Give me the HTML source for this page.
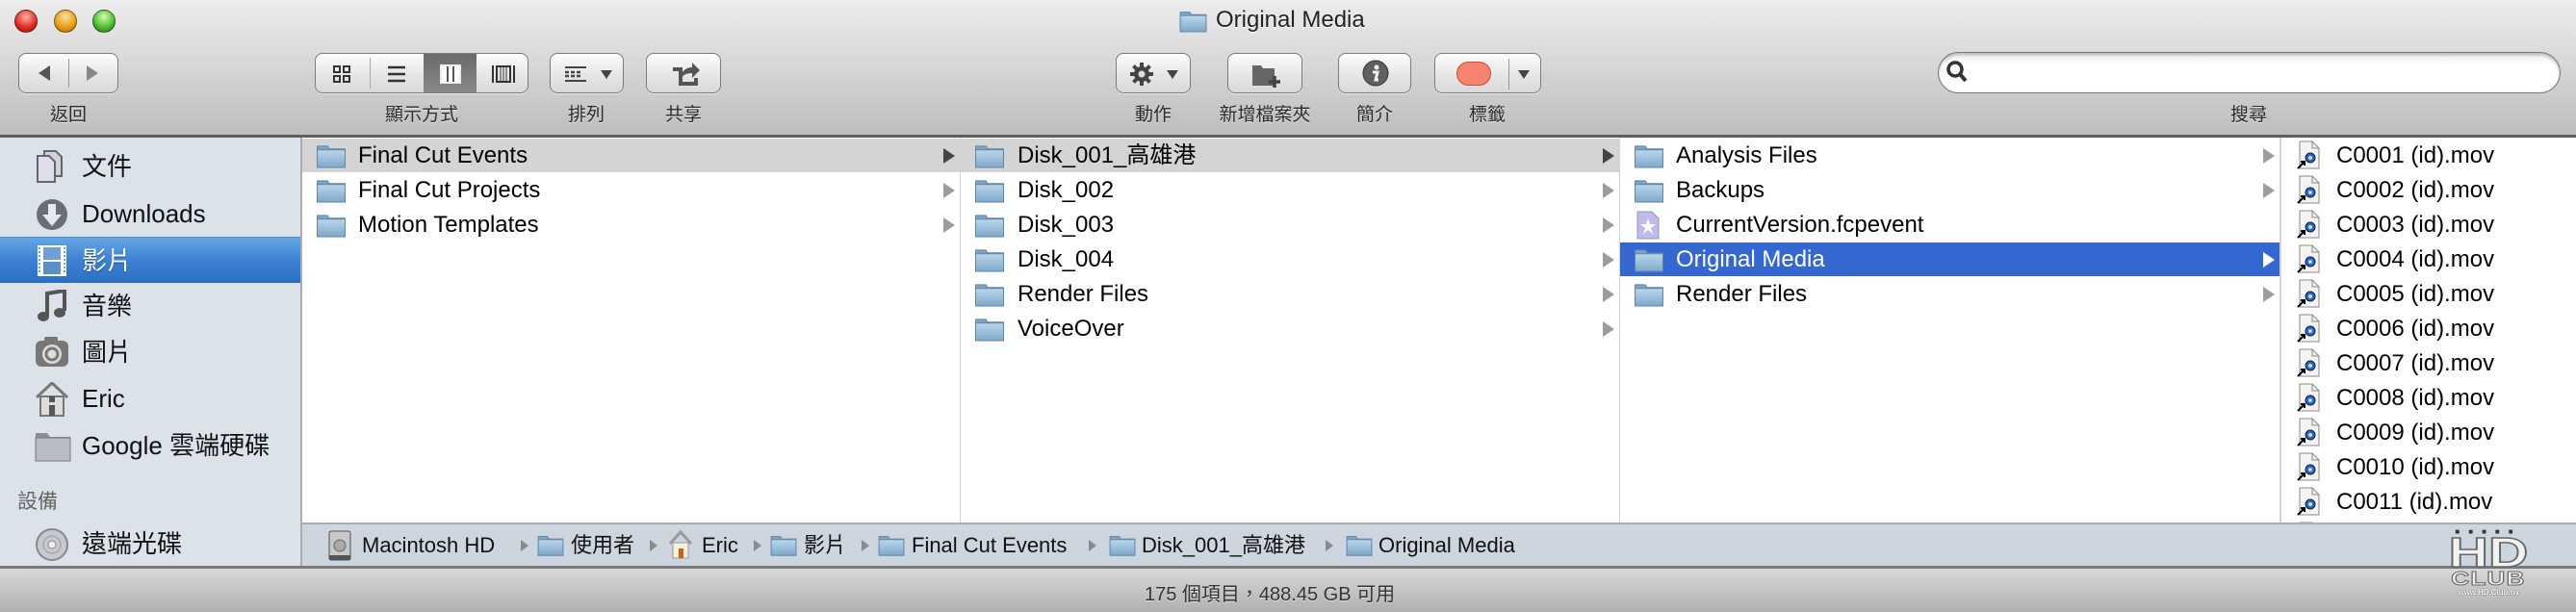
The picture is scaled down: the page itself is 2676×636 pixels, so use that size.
<!DOCTYPE html>
<html><head><meta charset="utf-8">
<style>
*{margin:0;padding:0;box-sizing:border-box}
body{width:2676px;height:636px;overflow:hidden;position:relative;font-family:"Liberation Sans","Noto Sans CJK TC",sans-serif;background:#fff;color:#000}
.abs{position:absolute}
#tb{left:0;top:0;width:2676px;height:140px;background:linear-gradient(#ececec,#d6d6d6 50%,#bdbdbd);}
#tbline{left:0;top:140px;width:2676px;height:3px;background:#5e5e5e}
.tl{position:absolute;top:10px;width:24px;height:24px;border-radius:50%;border:1px solid rgba(0,0,0,.45)}
.btn{position:absolute;top:55px;height:42px;border:1px solid #7c7c7c;border-radius:8px;background:linear-gradient(#fdfdfd,#e6e6e6 55%,#d9d9d9);box-shadow:0 1px 0 rgba(255,255,255,.6)}
.lbl{position:absolute;top:104px;font-size:19px;color:#2a2a2a;transform:translateX(-50%);white-space:nowrap;text-shadow:0 1px 0 rgba(255,255,255,.6)}
#side{left:0;top:143px;width:314px;height:445px;background:#dce2ea;border-right:2px solid #a9aeb5}
.si{position:absolute;left:0;width:312px;height:48px;line-height:48px;font-size:26px;padding-left:85px;color:#111;white-space:nowrap}
.si svg{position:absolute;left:36px;top:7px}
.col{position:absolute;top:143px;height:400px;background:#fff;border-right:1px solid #d4d4d4;overflow:hidden}
.r{position:absolute;left:0;right:0;height:35px;line-height:35px;font-size:24px;white-space:nowrap}
.r svg.ic{position:absolute;top:4px}
.arr{position:absolute;width:0;height:0;border-top:8px solid transparent;border-bottom:8px solid transparent;border-left:12px solid #9c9c9c;top:10px}
#path{left:314px;top:543px;width:2362px;height:45px;background:#cdd5de;border-top:2px solid #a9aeb5}
.p{position:absolute;top:0;line-height:43px;font-size:22px;white-space:nowrap;color:#111}
.pa{position:absolute;top:16px;width:0;height:0;border-top:6px solid transparent;border-bottom:6px solid transparent;border-left:8px solid #8a8a8a}
#sbline{left:0;top:588px;width:2676px;height:3px;background:#7a7a7a}
#sb{left:0;top:591px;width:2676px;height:45px;background:linear-gradient(#d8d8d8,#b0b0b0)}
</style></head><body>
<svg width="0" height="0" style="position:absolute">
<defs>
<linearGradient id="fg" x1="0" y1="0" x2="0" y2="1"><stop offset="0" stop-color="#bcd7ec"/><stop offset="1" stop-color="#7ea7c8"/></linearGradient>
<symbol id="fold" viewBox="0 0 32 28"><path d="M1 4h11l2 3h17v20H1z" fill="#7fa3c2" stroke="#5f86a8"/><path d="M1 8h30v19H1z" fill="url(#fg)" stroke="#5f86a8"/></symbol>
<symbol id="mov" viewBox="0 0 26 30"><path d="M4 1h13l7 7v21H4z" fill="#f4f4f4" stroke="#888"/><path d="M17 1v7h7" fill="none" stroke="#888"/><circle cx="15" cy="18" r="5" fill="#2d66c8" stroke="#123"/><circle cx="15" cy="18" r="2" fill="#bfe0ff"/><path d="M2 29l7-7M5 22h4v4" stroke="#000" stroke-width="2" fill="none"/></symbol>
</defs></svg>

<div id="tb" class="abs"></div>
<div id="tbline" class="abs"></div>
<div class="tl" style="left:15px;background:radial-gradient(circle at 50% 30%,#ffb0a8,#e0281e 60%,#a01008)"></div>
<div class="tl" style="left:56px;background:radial-gradient(circle at 50% 30%,#ffe0a0,#e69a10 60%,#a86000)"></div>
<div class="tl" style="left:96px;background:radial-gradient(circle at 50% 30%,#d0ffb0,#4cb82a 60%,#207010)"></div>
<svg class="abs" style="left:1224px;top:9px" width="31" height="25"><use href="#fold"/></svg>
<div class="abs" style="left:1263px;top:7px;font-size:24px;color:#222;text-shadow:0 1px 0 #fff">Original Media</div>

<div class="btn" style="left:19px;width:104px"><div style="position:absolute;left:51px;top:5px;width:1px;height:30px;background:#999"></div>
<div style="position:absolute;left:20px;top:12px;border-top:8px solid transparent;border-bottom:8px solid transparent;border-right:12px solid #555"></div>
<div style="position:absolute;left:70px;top:12px;border-top:8px solid transparent;border-bottom:8px solid transparent;border-left:12px solid #888"></div></div>
<div class="lbl" style="left:71px">返回</div>

<div class="btn" style="left:327px;width:222px;overflow:hidden">
<div style="position:absolute;left:112px;top:0;width:55px;height:42px;background:linear-gradient(#6a6a6a,#8a8a8a)"></div>
<div style="position:absolute;left:56px;top:4px;width:1px;height:32px;background:#aaa"></div>
<svg style="position:absolute;left:18px;top:12px" width="18" height="18"><rect x="1" y="1" width="6" height="6" fill="none" stroke="#333" stroke-width="2"/><rect x="11" y="1" width="6" height="6" fill="none" stroke="#333" stroke-width="2"/><rect x="1" y="11" width="6" height="6" fill="none" stroke="#333" stroke-width="2"/><rect x="11" y="11" width="6" height="6" fill="none" stroke="#333" stroke-width="2"/></svg>
<svg style="position:absolute;left:75px;top:12px" width="18" height="18"><path d="M0 2h18M0 9h18M0 16h18" stroke="#333" stroke-width="2.5"/></svg>
<svg style="position:absolute;left:129px;top:11px" width="22" height="20"><rect x="1" y="1" width="20" height="18" fill="#fff" stroke="#fff" stroke-width="2"/><path d="M8 1v18M14 1v18" stroke="#555" stroke-width="2"/><rect x="1" y="1" width="20" height="18" fill="none" stroke="#eee" stroke-width="2"/></svg>
<svg style="position:absolute;left:183px;top:11px" width="24" height="20"><path d="M1 1v18M23 1v18" stroke="#333" stroke-width="2"/><rect x="5" y="2" width="14" height="16" fill="none" stroke="#333" stroke-width="2"/><path d="M9 2v16M12 2v16M15 2v16" stroke="#333"/></svg>
</div>
<div class="lbl" style="left:438px">顯示方式</div>

<div class="btn" style="left:571px;width:77px">
<svg style="position:absolute;left:15px;top:12px" width="22" height="18"><path d="M0 2h22M0 16h22" stroke="#444" stroke-width="2"/><path d="M0 7h4M6 7h4M12 7h4M0 11h4M6 11h4M12 11h4" stroke="#444" stroke-width="2.5"/></svg>
<div style="position:absolute;left:52px;top:17px;border-left:6px solid transparent;border-right:6px solid transparent;border-top:9px solid #444"></div></div>
<div class="lbl" style="left:609px">排列</div>

<div class="btn" style="left:671px;width:78px">
<svg style="position:absolute;left:25px;top:8px" width="30" height="26"><path d="M2 8h8v15h16v-6" fill="none" stroke="#555" stroke-width="4"/><path d="M10 18c0-8 6-12 12-12V1l8 8-8 8v-5c-6 0-10 2-12 6z" fill="#555"/></svg></div>
<div class="lbl" style="left:710px">共享</div>

<div class="btn" style="left:1159px;width:78px">
<svg style="position:absolute;left:13px;top:8px" width="26" height="26" viewBox="0 0 26 26"><g fill="#444"><circle cx="13" cy="13" r="8"/><rect x="11" y="1" width="4" height="24"/><rect x="1" y="11" width="24" height="4"/><rect x="11" y="1" width="4" height="24" transform="rotate(45 13 13)"/><rect x="11" y="1" width="4" height="24" transform="rotate(-45 13 13)"/></g><circle cx="13" cy="13" r="3.5" fill="#ddd"/></svg>
<div style="position:absolute;left:52px;top:17px;border-left:6px solid transparent;border-right:6px solid transparent;border-top:9px solid #444"></div></div>
<div class="lbl" style="left:1198px">動作</div>

<div class="btn" style="left:1275px;width:78px">
<svg style="position:absolute;left:24px;top:8px" width="34" height="28"><path d="M1 4h9l2 3h12v18H1z" fill="#666"/><path d="M24 15v12M18 21h12" stroke="#444" stroke-width="3.5"/></svg></div>
<div class="lbl" style="left:1314px">新增檔案夾</div>

<div class="btn" style="left:1390px;width:76px">
<svg style="position:absolute;left:24px;top:6px" width="28" height="28"><circle cx="14" cy="14" r="13" fill="#606060" stroke="#333"/><circle cx="15" cy="8" r="2.5" fill="#eee"/><path d="M11 13h5l-2 8h3" fill="none" stroke="#eee" stroke-width="3"/></svg></div>
<div class="lbl" style="left:1428px">簡介</div>

<div class="btn" style="left:1490px;width:111px">
<div style="position:absolute;left:22px;top:8px;width:36px;height:25px;border-radius:13px;background:#f7826f;border:1px solid #c05040"></div>
<div style="position:absolute;left:76px;top:5px;width:1px;height:32px;background:#999"></div>
<div style="position:absolute;left:86px;top:17px;border-left:6px solid transparent;border-right:6px solid transparent;border-top:9px solid #444"></div></div>
<div class="lbl" style="left:1545px">標籤</div>

<div class="abs" style="left:2013px;top:54px;width:647px;height:43px;border-radius:22px;border:1px solid #777;background:linear-gradient(#eee,#fff 30%);box-shadow:inset 0 2px 3px rgba(0,0,0,.25)"></div>
<svg class="abs" style="left:2021px;top:62px" width="24" height="26"><circle cx="10" cy="10" r="7" fill="none" stroke="#333" stroke-width="3.5"/><path d="M15 15l6 7" stroke="#333" stroke-width="4"/></svg>
<div class="lbl" style="left:2336px">搜尋</div>

<!-- sidebar -->
<div id="side" class="abs">
<div class="si" style="top:6px"><svg width="36" height="34" viewBox="0 0 36 34"><path d="M10 1h12l6 6v20H10z" fill="#d0d4da" stroke="#666" stroke-width="2"/><path d="M3 6h12l6 6v21H3z" fill="#dde" stroke="#666" stroke-width="2"/></svg>文件</div>
<div class="si" style="top:55px"><svg width="36" height="36"><circle cx="18" cy="18" r="16" fill="#6a6f77"/><path d="M14 7h8v11h6L18 30 8 18h6z" fill="#e6e8ec"/></svg>Downloads</div>
<div class="si" style="top:103px;background:linear-gradient(#64a6e2,#3d82d2 50%,#2d6ec4);color:#fff;border-top:1px solid #4a8fd6;text-shadow:0 1px 1px rgba(0,0,0,.4)"><svg width="36" height="34"><rect x="3" y="1" width="30" height="32" fill="#fff"/><rect x="9" y="3" width="18" height="13" fill="#6fa0d4"/><rect x="9" y="18" width="18" height="13" fill="#5b8fc8"/><path d="M5 3v28M31 3v28" stroke="#6fa0d4" stroke-width="2" stroke-dasharray="2 2"/></svg>影片</div>
<div class="si" style="top:151px"><svg width="36" height="34"><path d="M13 27V4l18-3v21" fill="none" stroke="#555" stroke-width="4"/><ellipse cx="9" cy="28" rx="6" ry="5" fill="#555"/><ellipse cx="26" cy="24" rx="6" ry="5" fill="#555"/></svg>音樂</div>
<div class="si" style="top:199px"><svg width="36" height="34"><rect x="1" y="5" width="34" height="27" rx="6" fill="#777"/><rect x="10" y="1" width="14" height="6" rx="2" fill="#777"/><circle cx="18" cy="19" r="10" fill="#ddd"/><circle cx="18" cy="19" r="6" fill="none" stroke="#777" stroke-width="3"/></svg>圖片</div>
<div class="si" style="top:247px"><svg width="36" height="36"><path d="M2 16L18 1l16 15" fill="none" stroke="#777" stroke-width="3"/><rect x="6" y="15" width="24" height="20" fill="#ddd" stroke="#777" stroke-width="2"/><rect x="15" y="24" width="6" height="11" fill="#555"/><rect x="15" y="15" width="6" height="6" fill="#555"/></svg>Eric</div>
<div class="si" style="top:296px"><svg width="38" height="34"><path d="M1 4h12l3 4h21v25H1z" fill="#8a8f96"/><path d="M1 9h36v24H1z" fill="#b8bcc2" stroke="#777"/></svg>Google 雲端硬碟</div>
<div class="abs" style="left:18px;top:362px;font-size:21px;color:#666">設備</div>
<div class="si" style="top:398px"><svg width="36" height="36"><circle cx="18" cy="18" r="16" fill="#c6c9cf" stroke="#888" stroke-width="2"/><circle cx="18" cy="18" r="9" fill="none" stroke="#999"/><circle cx="18" cy="18" r="4" fill="#eee" stroke="#888"/></svg>遠端光碟</div>
</div>

<!-- column 1 -->
<div class="col" style="left:314px;width:684px">
<div class="r" style="top:1px;background:#d4d4d4"><svg class="ic" style="left:14px" width="32" height="27"><use href="#fold"/></svg><span style="position:absolute;left:58px">Final Cut Events</span><div class="arr" style="left:666px;border-left-color:#444"></div></div>
<div class="r" style="top:37px"><svg class="ic" style="left:14px" width="32" height="27"><use href="#fold"/></svg><span style="position:absolute;left:58px">Final Cut Projects</span><div class="arr" style="left:666px"></div></div>
<div class="r" style="top:73px"><svg class="ic" style="left:14px" width="32" height="27"><use href="#fold"/></svg><span style="position:absolute;left:58px">Motion Templates</span><div class="arr" style="left:666px"></div></div>
</div>
<!-- column 2 -->
<div class="col" style="left:998px;width:685px">
<div class="r" style="top:1px;background:#d4d4d4"><svg class="ic" style="left:14px" width="32" height="27"><use href="#fold"/></svg><span style="position:absolute;left:59px">Disk_001_高雄港</span><div class="arr" style="left:667px;border-left-color:#444"></div></div>
<div class="r" style="top:37px"><svg class="ic" style="left:14px" width="32" height="27"><use href="#fold"/></svg><span style="position:absolute;left:59px">Disk_002</span><div class="arr" style="left:667px"></div></div>
<div class="r" style="top:73px"><svg class="ic" style="left:14px" width="32" height="27"><use href="#fold"/></svg><span style="position:absolute;left:59px">Disk_003</span><div class="arr" style="left:667px"></div></div>
<div class="r" style="top:109px"><svg class="ic" style="left:14px" width="32" height="27"><use href="#fold"/></svg><span style="position:absolute;left:59px">Disk_004</span><div class="arr" style="left:667px"></div></div>
<div class="r" style="top:145px"><svg class="ic" style="left:14px" width="32" height="27"><use href="#fold"/></svg><span style="position:absolute;left:59px">Render Files</span><div class="arr" style="left:667px"></div></div>
<div class="r" style="top:181px"><svg class="ic" style="left:14px" width="32" height="27"><use href="#fold"/></svg><span style="position:absolute;left:59px">VoiceOver</span><div class="arr" style="left:667px"></div></div>
</div>
<!-- column 3 -->
<div class="col" style="left:1683px;width:686px">
<div class="r" style="top:1px"><svg class="ic" style="left:14px" width="32" height="27"><use href="#fold"/></svg><span style="position:absolute;left:58px">Analysis Files</span><div class="arr" style="left:668px"></div></div>
<div class="r" style="top:37px"><svg class="ic" style="left:14px" width="32" height="27"><use href="#fold"/></svg><span style="position:absolute;left:58px">Backups</span><div class="arr" style="left:668px"></div></div>
<div class="r" style="top:73px"><svg class="ic" style="left:16px;top:3px" width="26" height="30"><path d="M2 1h15l7 7v21H2z" fill="#e8e4f8" stroke="#999"/><path d="M2 1h15l7 7v21H2z" fill="#9a8fe0" opacity=".5"/><path d="M13 8l2 6h6l-5 4 2 6-5-4-5 4 2-6-5-4h6z" fill="#fff"/></svg><span style="position:absolute;left:58px">CurrentVersion.fcpevent</span></div>
<div class="r" style="top:109px;background:#3468d0;color:#fff"><svg class="ic" style="left:14px" width="32" height="27"><use href="#fold"/></svg><span style="position:absolute;left:58px">Original Media</span><div class="arr" style="left:668px;border-left-color:#fff"></div></div>
<div class="r" style="top:145px"><svg class="ic" style="left:14px" width="32" height="27"><use href="#fold"/></svg><span style="position:absolute;left:58px">Render Files</span><div class="arr" style="left:668px"></div></div>
</div>
<!-- column 4 -->
<div class="col" style="left:2369px;width:307px;border-right:none;border-left:1px solid #d4d4d4">
<div class="r" style="top:1px"><svg class="ic" style="left:15px;top:2px" width="26" height="30"><use href="#mov"/></svg><span style="position:absolute;left:57px">C0001 (id).mov</span></div>
<div class="r" style="top:37px"><svg class="ic" style="left:15px;top:2px" width="26" height="30"><use href="#mov"/></svg><span style="position:absolute;left:57px">C0002 (id).mov</span></div>
<div class="r" style="top:73px"><svg class="ic" style="left:15px;top:2px" width="26" height="30"><use href="#mov"/></svg><span style="position:absolute;left:57px">C0003 (id).mov</span></div>
<div class="r" style="top:109px"><svg class="ic" style="left:15px;top:2px" width="26" height="30"><use href="#mov"/></svg><span style="position:absolute;left:57px">C0004 (id).mov</span></div>
<div class="r" style="top:145px"><svg class="ic" style="left:15px;top:2px" width="26" height="30"><use href="#mov"/></svg><span style="position:absolute;left:57px">C0005 (id).mov</span></div>
<div class="r" style="top:181px"><svg class="ic" style="left:15px;top:2px" width="26" height="30"><use href="#mov"/></svg><span style="position:absolute;left:57px">C0006 (id).mov</span></div>
<div class="r" style="top:217px"><svg class="ic" style="left:15px;top:2px" width="26" height="30"><use href="#mov"/></svg><span style="position:absolute;left:57px">C0007 (id).mov</span></div>
<div class="r" style="top:253px"><svg class="ic" style="left:15px;top:2px" width="26" height="30"><use href="#mov"/></svg><span style="position:absolute;left:57px">C0008 (id).mov</span></div>
<div class="r" style="top:289px"><svg class="ic" style="left:15px;top:2px" width="26" height="30"><use href="#mov"/></svg><span style="position:absolute;left:57px">C0009 (id).mov</span></div>
<div class="r" style="top:325px"><svg class="ic" style="left:15px;top:2px" width="26" height="30"><use href="#mov"/></svg><span style="position:absolute;left:57px">C0010 (id).mov</span></div>
<div class="r" style="top:361px"><svg class="ic" style="left:15px;top:2px" width="26" height="30"><use href="#mov"/></svg><span style="position:absolute;left:57px">C0011 (id).mov</span></div>
<div class="r" style="top:397px"><svg class="ic" style="left:15px;top:2px" width="26" height="30"><use href="#mov"/></svg></div>
</div>

<!-- path bar -->
<div id="path" class="abs">
<svg class="abs" style="left:27px;top:6px" width="24" height="32"><rect x="1" y="1" width="22" height="30" rx="2" fill="#c8c8c8" stroke="#555"/><circle cx="12" cy="16" r="6" fill="#aaa" stroke="#666"/><rect x="1" y="26" width="22" height="5" fill="#555"/></svg>
<div class="p" style="left:62px">Macintosh HD</div><div class="pa" style="left:227px"></div>
<svg class="abs" style="left:244px;top:9px" width="28" height="24"><use href="#fold"/></svg>
<div class="p" style="left:279px">使用者</div><div class="pa" style="left:361px"></div>
<svg class="abs" style="left:380px;top:6px" width="26" height="30"><path d="M2 14L13 2l11 12" fill="none" stroke="#999" stroke-width="3"/><rect x="5" y="13" width="16" height="16" fill="#f5f0e0" stroke="#999"/><rect x="11" y="19" width="5" height="10" fill="#d06010"/></svg>
<div class="p" style="left:415px">Eric</div><div class="pa" style="left:469px"></div>
<svg class="abs" style="left:486px;top:9px" width="28" height="24"><use href="#fold"/></svg>
<div class="p" style="left:521px">影片</div><div class="pa" style="left:581px"></div>
<svg class="abs" style="left:598px;top:9px" width="28" height="24"><use href="#fold"/></svg>
<div class="p" style="left:633px">Final Cut Events</div><div class="pa" style="left:817px"></div>
<svg class="abs" style="left:838px;top:9px" width="28" height="24"><use href="#fold"/></svg>
<div class="p" style="left:872px">Disk_001_高雄港</div><div class="pa" style="left:1063px"></div>
<svg class="abs" style="left:1084px;top:9px" width="28" height="24"><use href="#fold"/></svg>
<div class="p" style="left:1118px">Original Media</div>
</div>
<div id="sbline" class="abs"></div>
<div id="sb" class="abs"></div>
<div class="abs" style="left:1189px;top:601px;font-size:20px;color:#333;white-space:nowrap;text-shadow:0 1px 0 rgba(255,255,255,.5)">175 個項目，488.45 GB 可用</div>

<!-- logo -->
<div class="abs" style="left:2540px;top:548px;width:90px;height:66px;font-family:'Liberation Sans',sans-serif;font-weight:bold;color:#f2f2f2;text-align:center">
<div style="font-size:8px;letter-spacing:9px;color:#333;line-height:9px">■■■■■</div>
<div style="font-size:44px;line-height:36px;letter-spacing:0;-webkit-text-stroke:1.5px #666;transform:scaleX(1.3)">HD</div>
<div style="font-size:20px;line-height:18px;letter-spacing:1px;-webkit-text-stroke:1px #666;transform:scaleX(1.3)">CLUB</div>
<div style="font-size:8px;line-height:9px;color:#fff;text-shadow:0 0 1px #000">www.HD.Club.tw</div>
</div>
</body></html>
